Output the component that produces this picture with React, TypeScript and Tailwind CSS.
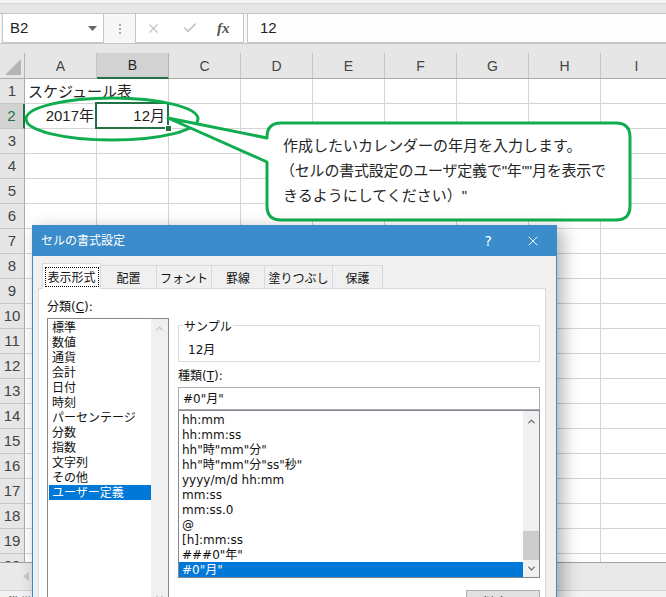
import { Fragment } from "react";
import { X, Check, ChevronUp, ChevronDown } from "lucide-react";

const SHEET = "font-['Liberation_Sans','Noto_Sans_CJK_JP',sans-serif]";
const UI = "font-['DejaVu_Sans','Noto_Sans_CJK_JP',sans-serif]";

const cols = ["A", "B", "C", "D", "E", "F", "G", "H", "I"];
const rows = Array.from({ length: 20 }, (_, i) => i + 1);

const categories = [
  "標準",
  "数値",
  "通貨",
  "会計",
  "日付",
  "時刻",
  "パーセンテージ",
  "分数",
  "指数",
  "文字列",
  "その他",
  "ユーザー定義",
];

const formats = [
  "hh:mm",
  "hh:mm:ss",
  'hh"時"mm"分"',
  'hh"時"mm"分"ss"秒"',
  "yyyy/m/d hh:mm",
  "mm:ss",
  "mm:ss.0",
  "@",
  "[h]:mm:ss",
  '###0"年"',
  '#0"月"',
];

const Cell = ({ r, c }: { r: number; c: string }) => {
  if (r === 1 && c === "A")
    return (
      <div className="h-[25px] relative border-b border-[#d4d4d4]">
        <span className="absolute left-[3px] top-px leading-[24px] whitespace-nowrap text-[15px] text-[#222]">
          スケジュール表
        </span>
      </div>
    );
  if (r === 2 && c === "A")
    return (
      <div className="h-[25px] border-r border-b border-[#d4d4d4] flex items-center justify-end pr-[2px] pt-px text-[15px] text-[#222]">
        2017年
      </div>
    );
  if (r === 2 && c === "B")
    return (
      <div className="h-[25px] relative border-r border-b border-[#d4d4d4] flex items-center justify-end pr-[3px] pt-px text-[15px] text-[#222]">
        12月
        <div className="absolute left-[-2px] top-[-2px] right-[-1px] bottom-[-1px] border-2 border-[#217346]" />
        <div className="absolute right-[-4px] bottom-[-4px] w-[7px] h-[7px] bg-[#217346] border border-white" />
      </div>
    );
  return <div className="h-[25px] border-r border-b border-[#d4d4d4]" />;
};

const Sheet = () => (
  <div className={`h-[509px] overflow-hidden bg-white ${SHEET}`}>
    <div className="grid grid-cols-[25px_repeat(9,72px)] w-max">
      <div className="h-[26px] bg-[#e6e6e6] border-r border-[#b5b5b5] border-b border-b-[#ababab] relative">
        <svg className="absolute left-0 top-0" width="25" height="26">
          <polygon points="21,6 21,22 5,22" fill="#b4b4b4" />
        </svg>
      </div>
      {cols.map((c) =>
        c === "B" ? (
          <div
            key={c}
            className="h-[26px] bg-[#d2d2d2] border-r border-[#b5b5b5] border-b-2 border-b-[#217346] flex items-center justify-center pt-px text-[14px] text-[#262626]"
          >
            {c}
          </div>
        ) : (
          <div
            key={c}
            className="h-[26px] bg-[#e6e6e6] border-r border-[#c6c6c6] border-b border-b-[#ababab] flex items-center justify-center pt-px text-[14px] text-[#444]"
          >
            {c}
          </div>
        )
      )}
      {rows.map((r) => (
        <Fragment key={r}>
          {r === 2 ? (
            <div className="h-[25px] bg-[#d2d2d2] border-r-2 border-r-[#217346] border-b border-b-[#c6c6c6] flex items-center justify-center pt-px text-[15px] text-[#217346]">
              {r}
            </div>
          ) : (
            <div className="h-[25px] bg-[#e6e6e6] border-r border-r-[#ababab] border-b border-b-[#c6c6c6] flex items-center justify-center pt-px text-[15px] text-[#444]">
              {r}
            </div>
          )}
          {cols.map((c) => (
            <Cell key={c} r={r} c={c} />
          ))}
        </Fragment>
      ))}
    </div>
  </div>
);

const FormulaBar = () => (
  <div className={SHEET}>
    <div className="h-[4px] bg-[#f3f3f3] border-b border-[#d6d6d6]" />
    <div className="h-[10px] bg-[#e6e6e6] border-b border-[#c6c6c6]" />
    <div className="h-[30px] flex bg-[#f7f7f7] border-b border-[#c6c6c6]">
      <div className="ml-[2px] w-[102px] -mt-px bg-white border border-[#c6c6c6] flex items-center pl-[7px] text-[15px] text-[#222]">
        B2
        <svg className="ml-auto mr-[6px]" width="9" height="5">
          <polygon points="0,0 9,0 4.5,5" fill="#666" />
        </svg>
      </div>
      <div className="w-[31px] flex flex-col items-center justify-center gap-[2px]">
        <span className="w-[2px] h-[2px] bg-[#aaa]" />
        <span className="w-[2px] h-[2px] bg-[#aaa]" />
        <span className="w-[2px] h-[2px] bg-[#aaa]" />
      </div>
      <div className="w-[109px] -mt-px bg-white border border-[#c6c6c6] flex items-center pl-[10px]">
        <X className="w-[15px] h-[15px] text-[#c2c2c2]" strokeWidth={1.8} />
        <Check className="w-[16px] h-[16px] ml-[21px] text-[#c2c2c2]" strokeWidth={2.4} />
        <span className="ml-[19px] italic font-['Liberation_Serif',serif] text-[15px] font-bold text-[#555]">
          fx
        </span>
      </div>
      <div className="ml-[3px] flex-1 -mt-px bg-[#fdfdfd] border border-r-0 border-[#c6c6c6] flex items-center pl-[12px] text-[15px] text-[#222]">
        12
      </div>
    </div>
    <div className="h-[9px] bg-[#e6e6e6]" />
  </div>
);

const Annotations = () => (
  <>
    <svg
      className="absolute left-0 top-0 z-10 pointer-events-none"
      width="666"
      height="597"
    >
      <ellipse
        cx="112"
        cy="119"
        rx="86"
        ry="21"
        fill="none"
        stroke="#0fad4f"
        strokeWidth="3"
      />
      <path
        d="M 281 123 H 616 Q 630 123 630 137 V 206 Q 630 220 616 220 H 281 Q 267 220 267 206 V 162 L 168 118 L 267 138 V 137 Q 267 123 281 123 Z"
        fill="white"
        stroke="#0fad4f"
        strokeWidth="3"
        strokeLinejoin="round"
      />
    </svg>
    <div
      className={`absolute left-[283px] top-[133px] z-10 text-[15px] leading-[25px] text-[#262626] whitespace-nowrap ${SHEET}`}
    >
      <div>作成したいカレンダーの年月を入力します。</div>
      <div className="tracking-[-0.2px] -ml-[3px]">
        （セルの書式設定のユーザ定義で"年""月を表示で
      </div>
      <div>きるようにしてください）"</div>
    </div>
  </>
);

const tabs = [
  { label: "配置", w: "w-[57px]" },
  { label: "フォント", w: "w-[56px]" },
  { label: "罫線", w: "w-[54px]" },
  { label: "塗りつぶし", w: "w-[69px]" },
  { label: "保護", w: "w-[51px]" },
];

const Dialog = () => (
  <div
    className={`absolute left-[32px] top-[225px] w-[525px] h-[400px] bg-[#f0f0f0] border border-[#3a8ccb] shadow-[6px_4px_16px_rgba(0,0,0,0.3)] z-20 text-[12px] text-[#111] ${UI}`}
  >
    <div className="h-[30px] bg-[#3a8ccb] flex items-center text-white pl-[8px]">
      <span>セルの書式設定</span>
      <span className="ml-auto mr-[33px] text-[14px]">?</span>
      <X className="w-[16px] h-[16px] mr-[15px]" strokeWidth={1.4} />
    </div>

    <div className="h-[32px] pl-[9px] flex items-end">
      <div className="relative z-10 -mb-px w-[59px] h-[26px] bg-white border border-[#d9d9d9] border-b-0 flex items-center justify-center">
        <span className="border border-dotted border-black h-[20px] w-[54px] flex items-center justify-center pt-[3px]">
          表示形式
        </span>
      </div>
      {tabs.map((t) => (
        <div
          key={t.label}
          className={`${t.w} -ml-px h-[23px] bg-[#f0f0f0] border border-[#d9d9d9] border-b-0 flex items-center justify-center pt-[3px]`}
        >
          {t.label}
        </div>
      ))}
    </div>

    <div className="ml-[5px] w-[508px] h-[340px] bg-white border border-[#d9d9d9] flex pl-[8px] gap-[9px]">
      <div className="w-[122px]">
        <div className="h-[29px] pt-[10px] leading-[16px]">
          分類(<span className="underline">C</span>):
        </div>
        <div className="h-[300px] border border-[#828790] flex">
          <div className="flex-1 pt-px">
            {categories.map((c, i) =>
              i === categories.length - 1 ? (
                <div
                  key={c}
                  className="h-[15px] pt-[2px] leading-[13px] ml-px pl-[3px] bg-[#0078d7] text-white"
                >
                  {c}
                </div>
              ) : (
                <div key={c} className="h-[15px] pt-[2px] leading-[13px] ml-px pl-[3px]">
                  {c}
                </div>
              )
            )}
          </div>
          <div className="w-[17px] bg-[#f0f0f0] flex flex-col items-center">
            <ChevronUp className="w-[11px] h-[11px] mt-[4px] text-[#c2c2c2]" strokeWidth={2.5} />
            <ChevronDown className="w-[11px] h-[11px] mt-[258px] text-[#c2c2c2]" strokeWidth={2.5} />
          </div>
        </div>
      </div>

      <div className="w-[362px] flex flex-col">
        <div className="mt-[36px] h-[37px] border border-[#dcdcdc] relative">
          <span className="absolute top-[-8px] left-[4px] bg-white px-px pt-px leading-[16px]">
            サンプル
          </span>
          <div className="pl-[9px] pt-[16px] leading-[16px]">12月</div>
        </div>
        <div className="h-[25px] pt-[6px] leading-[16px]">
          種類(<span className="underline">T</span>):
        </div>
        <div className="h-[23px] border border-[#abadb3] pl-[4px] pt-px leading-[21px]">
          #0"月"
        </div>
        <div className="h-[168px] border border-[#828790] flex">
          <div className="flex-1 pt-px">
            {formats.map((f, i) =>
              i === formats.length - 1 ? (
                <div
                  key={f}
                  className="h-[15px] pt-[2px] leading-[13px] pl-[3px] bg-[#0078d7] text-white"
                >
                  {f}
                </div>
              ) : (
                <div key={f} className="h-[15px] pt-[2px] leading-[13px] pl-[3px]">
                  {f}
                </div>
              )
            )}
          </div>
          <div className="w-[16px] bg-[#f0f0f0] relative flex flex-col items-center">
            <ChevronUp className="w-[11px] h-[11px] mt-[5px] text-[#606060]" strokeWidth={2.5} />
            <div className="absolute left-0 right-0 top-[120px] h-[29px] bg-[#cdcdcd]" />
            <ChevronDown className="w-[11px] h-[11px] mt-auto mb-[3px] text-[#606060]" strokeWidth={2.5} />
          </div>
        </div>
        <div className="mt-[12px] self-end w-[74px] h-[23px] bg-[#e1e1e1] border border-[#adadad] flex items-center justify-center pt-[2px]">
          削除(D)
        </div>
      </div>
    </div>
  </div>
);

export default function App() {
  return (
    <div className="relative w-[666px] h-[597px] overflow-hidden bg-white">
      <FormulaBar />
      <Sheet />
      <div className="h-[28px] bg-[#e9e9e9] border-t border-[#9f9f9f] flex items-center">
        <svg className="ml-[23px]" width="6" height="9">
          <polygon points="6,0 6,9 0,4.5" fill="#c8c8c8" />
        </svg>
      </div>
      <div
        className={`h-[22px] bg-[#f3f3f3] border-t border-[#d0d0d0] pl-[8px] pt-[3px] text-[12px] text-[#333] ${SHEET}`}
      >
        準備完了
      </div>
      <Annotations />
      <Dialog />
    </div>
  );
}
